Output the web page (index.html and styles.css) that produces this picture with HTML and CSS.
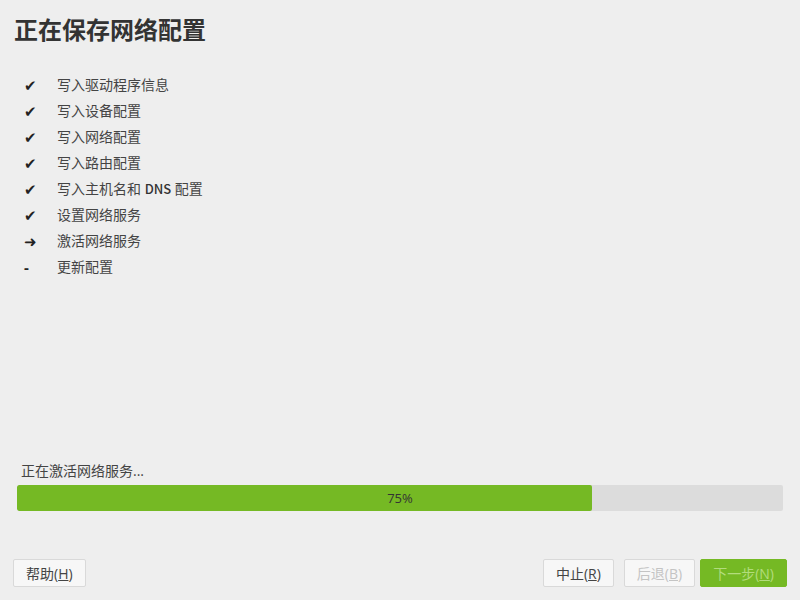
FILE: index.html
```html
<!DOCTYPE html>
<html lang="zh-CN">
<head>
    <meta charset="UTF-8">
    <title>正在保存网络配置</title>
    <link rel="stylesheet" href="styles.css">
</head>
<body>
<div class="page">
    <h1 class="title">正在保存网络配置</h1>

    <ul class="steps">
        <li><span class="mark">✔</span>写入驱动程序信息</li>
        <li><span class="mark">✔</span>写入设备配置</li>
        <li><span class="mark">✔</span>写入网络配置</li>
        <li><span class="mark">✔</span>写入路由配置</li>
        <li><span class="mark">✔</span>写入主机名和&nbsp;<span class="dns">DNS</span>&nbsp;配置</li>
        <li><span class="mark">✔</span>设置网络服务</li>
        <li><span class="mark">➜</span>激活网络服务</li>
        <li><span class="mark dash">-</span>更新配置</li>
    </ul>

    <div class="status">
        <div class="status-text">正在激活网络服务...</div>
        <div class="bar">
            <div class="bar-fill" style="width: 75%"></div>
            <div class="bar-label">75%</div>
        </div>
    </div>

    <div class="buttons">
        <button class="btn">帮助(<u>H</u>)</button>
        <div class="spacer"></div>
        <button class="btn">中止(<u>R</u>)</button>
        <button class="btn disabled">后退(<u>B</u>)</button>
        <button class="btn next">下一步(<u>N</u>)</button>
    </div>
</div>
</body>
</html>
```

FILE: styles.css
```css
*{
    margin: 0;
    padding: 0;
    list-style: none;
    box-sizing: border-box;
}
html,body{
    background-color: #eeeeee;
    height: 100%;
}
body{
    font-family: "Open Sans", "Noto Sans CJK SC", sans-serif;
    color: #3c3c3c;
}
.page{
    height: 600px;
    display: flex;
    flex-direction: column;
    padding: 13px 13px 13px 13px;
}
.title{
    font-size: 24px;
    font-weight: bold;
    line-height: 34px;
    color: #333333;
    padding-left: 1px;
}
.steps{
    margin-top: 25px;
    font-size: 14px;
    color: #444444;
}
.steps li{
    height: 26px;
    line-height: 26px;
    display: flex;
}
.dns{
    font-family: "Noto Sans CJK SC", sans-serif;
    font-size: 13px;
    font-weight: 500;
    color: #333333;
}
.mark{
    width: 44px;
    padding-left: 11px;
    font-size: 15px;
    color: #222222;
}
.dash{
    font-weight: bold;
}
.status{
    margin-top: auto;
    padding: 0 4px;
}
.status-text{
    font-size: 14px;
    line-height: 20px;
    color: #444444;
    padding-left: 4px;
    margin-bottom: 4px;
}
.bar{
    position: relative;
    height: 26px;
    background-color: #dcdcdc;
    border-radius: 2px;
    overflow: hidden;
}
.bar-fill{
    height: 100%;
    background-color: #75b924;
    border-radius: 2px;
}
.bar-label{
    position: absolute;
    top: 0;
    left: 0;
    right: 0;
    text-align: center;
    line-height: 26px;
    font-size: 13px;
    color: #333333;
}
.buttons{
    margin-top: 48px;
    display: flex;
    gap: 10px;
}
.spacer{
    flex: 1;
}
.btn{
    height: 28px;
    padding: 0 12px;
    font-family: "Open Sans", "Noto Sans CJK SC", sans-serif;
    font-size: 14px;
    color: #444444;
    background-color: #f7f7f7;
    border: 1px solid #d9d9d9;
    border-radius: 2px;
}
.btn u{
    text-decoration: underline;
}
.disabled{
    color: #c4c4c4;
}
.next{
    margin-left: -5px;
    background-color: #75b924;
    border-color: #75b924;
    color: #b2dc7c;
}
```
